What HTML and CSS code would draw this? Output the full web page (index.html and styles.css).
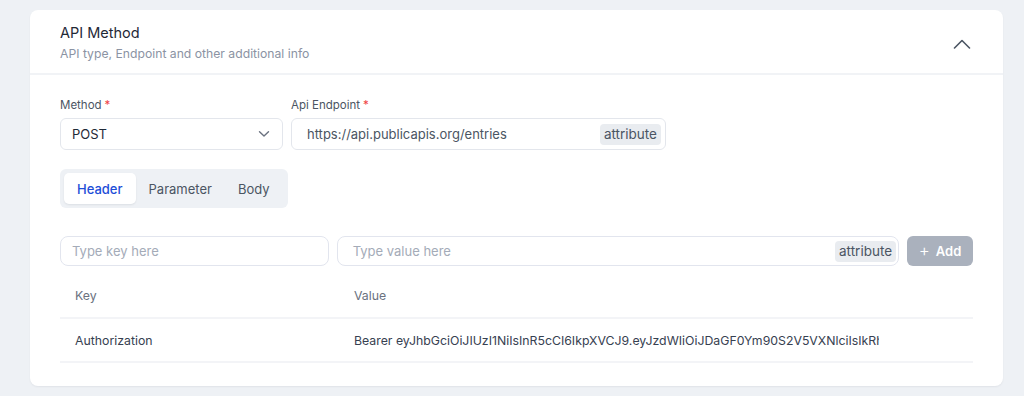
FILE: index.html
```html
<!DOCTYPE html>
<html>
<head>
	<title>API Method</title>
	<link rel="stylesheet" href="styles.css">
</head>
<body>
	<div class="card">
		<div class="card_head">
			<div>
				<h2 class="card_title">API Method</h2>
				<p class="card_sub">API type, Endpoint and other additional info</p>
			</div>
			<svg class="chevron" width="18" height="10" viewBox="0 0 18 10"><path d="M1.5 9 L9 1.5 L16.5 9" fill="none" stroke="#4b5563" stroke-width="1.6" stroke-linecap="round" stroke-linejoin="round"/></svg>
		</div>
		<div class="card_body">
			<div class="fields">
				<div class="field method_field">
					<label class="label">Method<span class="req">*</span></label>
					<div class="box select">
						<span class="value">POST</span>
						<svg width="12" height="8" viewBox="0 0 12 8"><path d="M1.5 1.8 L6 6 L10.5 1.8" fill="none" stroke="#6b7280" stroke-width="1.4" stroke-linecap="round" stroke-linejoin="round"/></svg>
					</div>
				</div>
				<div class="field endpoint_field">
					<label class="label">Api Endpoint<span class="req">*</span></label>
					<div class="box">
						<span class="value url">https://api.publicapis.org/entries</span>
						<span class="attr">attribute</span>
					</div>
				</div>
			</div>

			<div class="tabs">
				<div class="tab active">Header</div>
				<div class="tab">Parameter</div>
				<div class="tab">Body</div>
			</div>

			<div class="add_row">
				<div class="box small key_input"><span class="ph">Type key here</span></div>
				<div class="box small value_input"><span class="ph">Type value here</span><span class="attr">attribute</span></div>
				<button class="add_btn"><span class="plus">+</span>Add</button>
			</div>

			<div class="table">
				<div class="trow thead">
					<div class="col_key">Key</div>
					<div class="col_val">Value</div>
				</div>
				<div class="trow">
					<div class="col_key">Authorization</div>
					<div class="col_val"><span class="token">Bearer eyJhbGciOiJIUzI1NiIsInR5cCI6IkpXVCJ9.eyJzdWIiOiJDaGF0Ym90S2V5VXNlciIsIkRh</span></div>
				</div>
			</div>
		</div>
	</div>
</body>
</html>
```

FILE: styles.css
```css
*{
	box-sizing: border-box;
	margin: 0px;
	padding: 0px;
}
body
{
	background-color: #eef1f5;
	font-family: Inter, "Liberation Sans", sans-serif;
	padding: 10px 20px 10px 30px;
}
.card
{
	width: 973px;
	background-color: #fff;
	border-radius: 8px;
	box-shadow: 0 1px 2px rgba(16, 24, 40, 0.06);
	overflow: hidden;
}
.card_head
{
	display: flex;
	justify-content: space-between;
	align-items: center;
	padding: 14px 32px 12px 30px;
	border-bottom: 2px solid #f1f3f6;
	height: 65px;
}
.card_title
{
	font-size: 14.5px;
	font-weight: 400;
	color: #1f2937;
	line-height: 18px;
}
.card_sub
{
	margin-top: 4px;
	font-size: 12.2px;
	color: #8b93a3;
	line-height: 16px;
}
.chevron
{
	margin-top: 2px;
}
.card_body
{
	padding: 23px 30px 23px 30px;
}
.fields
{
	display: flex;
	gap: 8px;
}
.field
{
	display: flex;
	flex-direction: column;
	gap: 5px;
}
.method_field
{
	width: 223px;
}
.endpoint_field
{
	width: 375px;
}
.label
{
	font-size: 11.5px;
	color: #4b5563;
	line-height: 15px;
}
.req
{
	color: #ef4444;
	margin-left: 3px;
}
.box
{
	display: flex;
	align-items: center;
	justify-content: space-between;
	height: 32px;
	border: 1px solid #e3e6ec;
	border-radius: 6px;
	padding: 0 4px 0 11px;
	background-color: #fff;
}
.select
{
	padding-right: 12px;
}
.value
{
	font-size: 13px;
	color: #1f2937;
}
.url
{
	color: #4b5563;
	margin-left: 4px;
}
.attr
{
	background-color: #e9ecf0;
	color: #4b5563;
	font-size: 13.5px;
	padding: 3px 4px;
	border-radius: 4px;
	line-height: 15px;
}
.tabs
{
	display: inline-flex;
	margin-top: 19px;
	padding: 4px;
	background-color: #eef1f5;
	border-radius: 6px;
	width: 228px;
	height: 39px;
}
.tab
{
	padding: 0 13px;
	display: flex;
	align-items: center;
	font-size: 13px;
	color: #4b5563;
	border-radius: 5px;
}
.tab.active
{
	background-color: #fff;
	color: #1d4ed8;
	font-weight: 500;
	box-shadow: 0 1px 2px rgba(16, 24, 40, 0.08);
}
.add_row
{
	display: flex;
	gap: 8px;
	margin-top: 28px;
	width: 913px;
}
.small
{
	height: 30px;
	border-radius: 8px;
	border-color: #e2e5ee;
}
.key_input
{
	width: 269px;
}
.value_input
{
	width: 563px;
	padding-left: 15px;
	padding-right: 2px;
}
.ph
{
	font-size: 13px;
	color: #a4abb8;
}
.add_btn
{
	width: 66px;
	height: 30px;
	border: none;
	border-radius: 6px;
	background-color: #aab1bd;
	color: #fff;
	font-family: Inter, "Liberation Sans", sans-serif;
	font-size: 13px;
	font-weight: 600;
	display: flex;
	align-items: center;
	justify-content: center;
	gap: 6px;
}
.plus
{
	font-weight: 300;
	font-size: 17px;
	line-height: 17px;
	margin-top: -2px;
}
.table
{
	margin-top: 11px;
	width: 913px;
}
.trow
{
	display: flex;
	align-items: center;
	height: 44px;
	border-bottom: 2px solid #f3f4f7;
	font-size: 12.3px;
	color: #374151;
}
.thead
{
	height: 42px;
	padding-bottom: 4px;
	color: #6b7280;
}
.col_key
{
	width: 279px;
	padding-left: 15px;
}
.col_val
{
	width: 540px;
	padding-left: 15px;
	white-space: nowrap;
}
.token
{
	display: block;
	max-width: 526px;
	overflow: hidden;
}
```
